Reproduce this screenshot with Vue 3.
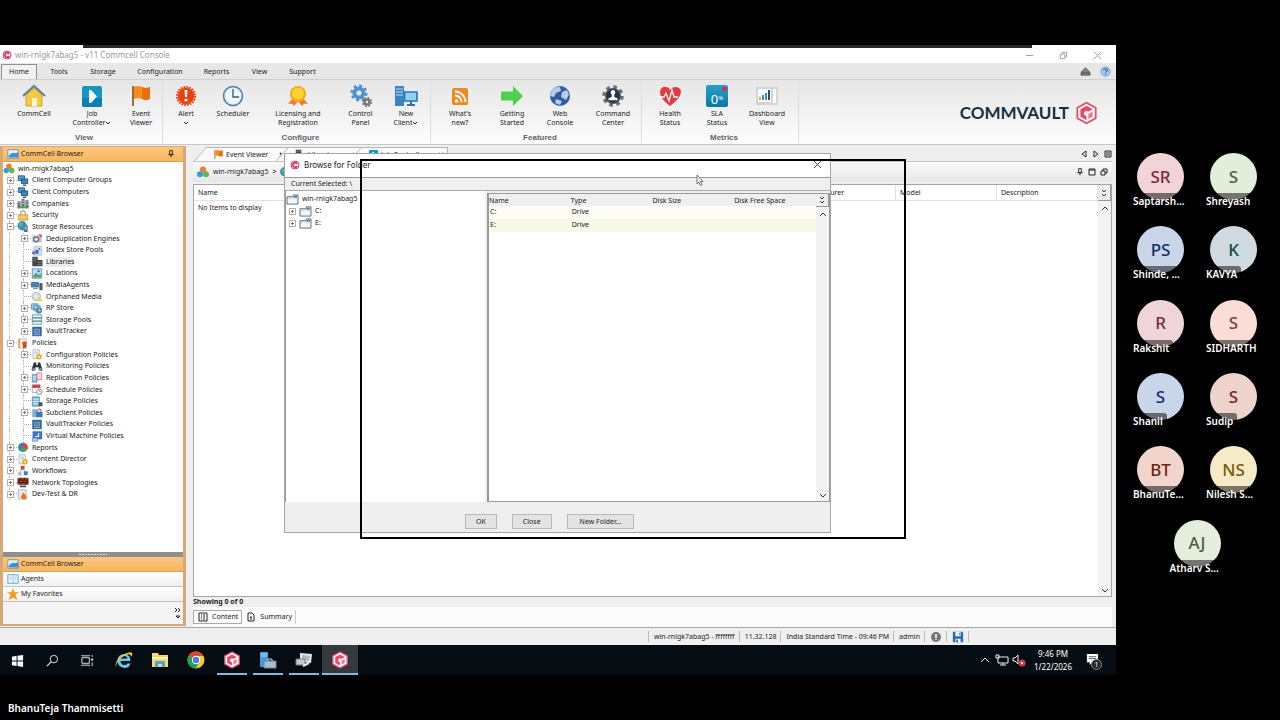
<template>
  <div class="meeting">
    <svg class="sprite" aria-hidden="true">
      <symbol id="cv" viewBox="0 0 20 20">
        <path d="M10 1 18 5.500V14.500L10 19 2 14.500V5.500Z" fill="#fff" stroke="#e8486a" stroke-width="1.500" />
        <path d="M10 3.800 15.300 6.800 11.500 9 10 8 8 9.200V11.500L10 12.700V16.200L4.700 13.200V6.800Z" fill="#e8486a" />
        <path d="M11.500 10.800l3.800-2v4.400l-3.800 2z" fill="#f07d94" />
      </symbol>
      <symbol id="cvring" viewBox="0 0 20 20">
        <circle cx="10" cy="10" r="8" fill="#fde9ed" stroke="#e0355a" stroke-width="2" />
        <path d="M14 7.500A4.500 4.500 0 1 0 14 12.500" fill="none" stroke="#c81e48" stroke-width="3" />
      </symbol>
      <symbol id="house" viewBox="0 0 24 24">
        <path d="M4 11 12 4l8 7v11H4z" fill="#f7c843" stroke="#d9a520" />
        <path d="M1 12 12 2l11 10" fill="none" stroke="#5f8396" stroke-width="2.200" />
        <path d="M10 14h5v8h-5z" fill="#fff6dc" />
      </symbol>
      <symbol id="play" viewBox="0 0 24 24">
        <rect x="2" y="2" width="20" height="21" rx="2" fill="#1398c4" />
        <path d="M2 14h20v7q0 2-2 2H4q-2 0-2-2z" fill="#0b7fae" />
        <path d="M9 6h2l6 6.500-6 6.500H9z" fill="#fff" />
      </symbol>
      <symbol id="flag" viewBox="0 0 24 24">
        <path d="M4 2v20" stroke="#9a6a3a" stroke-width="2" />
        <path d="M5 3q4-2 8 0t8 0v12q-4 2-8 0t-8 0z" fill="#f98b1c" />
        <path d="M13 3q4 2 8 0v12q-4 2-8 0z" fill="#e8700d" />
      </symbol>
      <symbol id="alert" viewBox="0 0 24 24">
        <circle cx="12" cy="12" r="8" fill="#e8400f" />
        <circle cx="12" cy="12" r="8.500" fill="none" stroke="#e8400f" stroke-width="3" stroke-dasharray="1.670 1" />
        <path d="M10.500 6h3l-.5 7h-2z" fill="#fff" />
        <circle cx="12" cy="16" r="1.600" fill="#fff" />
      </symbol>
      <symbol id="clock" viewBox="0 0 24 24">
        <circle cx="12" cy="12" r="9.500" fill="#d8ecf7" stroke="#54809c" stroke-width="1.600" />
        <circle cx="12" cy="12" r="7.500" fill="#edf7fc" />
        <path d="M12 5v8h6" fill="none" stroke="#34617e" stroke-width="1.400" />
      </symbol>
      <symbol id="medal" viewBox="0 0 24 24">
        <path d="M7 14 2 20l4-.5L8 22l4-5zM17 14l5 6-4-.5-2 2.500-4-5z" fill="#ee7a2b" />
        <circle cx="12" cy="10" r="8" fill="#f6a81c" />
        <circle cx="12" cy="9.500" r="6" fill="#fdd22e" />
      </symbol>
      <symbol id="gears" viewBox="0 0 24 24">
        <circle cx="10" cy="9" r="4.500" fill="none" stroke="#4f94cf" stroke-width="4" />
        <circle cx="10" cy="9" r="7" fill="none" stroke="#4f94cf" stroke-width="3" stroke-dasharray="2.750 2.750" />
        <circle cx="18" cy="18" r="2.500" fill="none" stroke="#77797c" stroke-width="2.500" />
        <circle cx="18" cy="18" r="4.200" fill="none" stroke="#77797c" stroke-width="2" stroke-dasharray="1.650 1.650" />
      </symbol>
      <symbol id="pc" viewBox="0 0 24 24">
        <path d="M1 2h9v20H1z" fill="#3d83bd" />
        <path d="M2 5h7M2 8h7M2 11h7" stroke="#bfe0f5" stroke-width="1.200" />
        <path d="M10.500 8h12.500v9H10.500z" fill="#8fd0f5" stroke="#2f76b0" stroke-width="1.600" />
        <path d="M17 17v3M13 21h8" stroke="#2f76b0" stroke-width="2" />
      </symbol>
      <symbol id="rss" viewBox="0 0 24 24">
        <rect x="4" y="4" width="16" height="17" rx="2" fill="#ef8a22" />
        <circle cx="8.500" cy="17" r="1.800" fill="#fff" />
        <path d="M7 11.500a6.500 6.500 0 0 1 6.500 6.500M7 7.500A10.500 10.500 0 0 1 17.500 18" fill="none" stroke="#fff" stroke-width="1.800" />
      </symbol>
      <symbol id="arrow" viewBox="0 0 24 24">
        <path d="M1 7.500h12V2L23 12 13 22v-5.500H1z" fill="#4fd14c" />
      </symbol>
      <symbol id="globe" viewBox="0 0 24 24">
        <circle cx="12" cy="12" r="10" fill="#335b9e" />
        <path d="M4 6q4-4 8-3l1 4-5 2-2 4-4-1zM14 8l5-2 2 5-3 5-5-3zM8 15l6 2-2 4-5-2z" fill="#b4cdec" />
      </symbol>
      <symbol id="command" viewBox="0 0 24 24">
        <circle cx="12" cy="12" r="9" fill="none" stroke="#6b7076" stroke-width="3.500" stroke-dasharray="3.600 3.470" />
        <circle cx="12" cy="12" r="8" fill="#4a525b" />
        <circle cx="12" cy="12" r="6.500" fill="#1d3350" />
        <path d="M12 6a2.500 2.500 0 0 1 1.300 4.500V13l3.200 1.300v2h-9v-2l3.200-1.300v-2.500A2.500 2.500 0 0 1 12 6z" fill="#fff" />
      </symbol>
      <symbol id="heart" viewBox="0 0 24 24">
        <path d="M12 22Q1 14 2 7q2-5 6-4 3 0 4 3 2-3 5-3 5 0 6 4 0 7-11 15z" fill="#e23c3f" />
        <path d="M0 13h6l2-4 3 8 3-11 2 7h4" fill="none" stroke="#fff" stroke-width="1.300" />
      </symbol>
      <symbol id="chart" viewBox="0 0 24 24">
        <path d="M1 3h22v18H1z" fill="#d4d4d4" />
        <path d="M3 5h13v13H3zM18 5h3v14h-3z" fill="#fff" />
        <path d="M5 16v-3" stroke="#e8a33a" stroke-width="2" />
        <path d="M8 16v-5M11 16V9" stroke="#3b8fc4" stroke-width="2" />
        <path d="M14 16V6" stroke="#2c4f73" stroke-width="2" />
      </symbol>
      <symbol id="balls" viewBox="0 0 14 14">
        <circle cx="7" cy="4" r="3.500" fill="#f07c31" />
        <circle cx="3.500" cy="9.500" r="3.500" fill="#3b9ad8" />
        <circle cx="10.500" cy="9.500" r="3.500" fill="#5cb947" />
      </symbol>
      <symbol id="screens" viewBox="0 0 14 14">
        <path d="M1 1h8v6H1z" fill="#4f9ad6" stroke="#1c4f80" />
        <path d="M5 5h8v6H5z" fill="#3a83c4" stroke="#1a466f" />
        <path d="M7 13h4" stroke="#29323b" stroke-width="1.500" />
      </symbol>
      <symbol id="buildings" viewBox="0 0 14 14">
        <path d="M0 4h4v9H0zM5 1h4v12H5zM10 3h4v10h-4z" fill="#69737a" />
        <path d="M1 6h2M6 4h2M11 5h2M6 7h2M11 8h2" stroke="#c8e0ee" />
        <path d="M0 12h14" stroke="#4c9c4c" stroke-width="2" />
      </symbol>
      <symbol id="lock" viewBox="0 0 14 14">
        <path d="M4 7V4a3 3 0 0 1 6 0v3" fill="none" stroke="#a5a59b" stroke-width="1.600" />
        <path d="M1 6h12v7H1z" fill="#f1c24c" stroke="#c48f24" stroke-width=".8" />
        <path d="M2 9h10" stroke="#fbe39a" />
      </symbol>
      <symbol id="store" viewBox="0 0 14 14">
        <circle cx="6" cy="6" r="6" fill="#3792c7" />
        <path d="M3 2l4 1-1 3-4 1z" fill="#67bd69" />
        <path d="M8 6h5v8H8z" fill="#5d6f80" />
        <path d="M9 8h3M9 10h3" stroke="#d9e3ec" />
      </symbol>
      <symbol id="dedup" viewBox="0 0 14 14">
        <path d="M1 3h12v9H1z" fill="#bec5cb" />
        <circle cx="6" cy="8" r="4" fill="#6f7c88" />
        <circle cx="6" cy="8" r="2" fill="#f1f4f6" />
        <path d="M8 2h5v4z" fill="#d94238" />
      </symbol>
      <symbol id="index" viewBox="0 0 14 14">
        <path d="M3 2h10v11H3z" fill="#d2e4f5" stroke="#8ea9c3" stroke-width=".7" />
        <path d="M5 6h4v5H5zM8 4h3v3" fill="#356fc4" />
        <circle cx="3" cy="10" r="2.500" fill="#76808c" />
      </symbol>
      <symbol id="library" viewBox="0 0 14 14">
        <path d="M1 1h7v12H1zM7 5h7v8H7z" fill="#434649" />
        <path d="M2 3h5M2 6h4M8 8h5M8 11h5" stroke="#8a8f93" />
      </symbol>
      <symbol id="location" viewBox="0 0 14 14">
        <path d="M1 1h12v12H1z" fill="#bfe1f5" stroke="#4b82ab" />
        <path d="M2 10l4-4 3 3 3-2v5H2z" fill="#5da65f" />
        <circle cx="9" cy="4" r="1.500" fill="#2d6ec0" />
      </symbol>
      <symbol id="agent" viewBox="0 0 14 14">
        <path d="M0 3h9v6H0z" fill="#3886c1" stroke="#44535f" stroke-width=".8" />
        <path d="M10 4h4v9h-4z" fill="#4d5961" />
        <path d="M2 11h6" stroke="#4d5961" />
      </symbol>
      <symbol id="disc" viewBox="0 0 14 14">
        <circle cx="6" cy="7" r="5.500" fill="#d5dadd" stroke="#98a0a6" stroke-width=".7" />
        <circle cx="6" cy="7" r="1.500" fill="#fff" />
        <path d="M7 13l3.500-6 3.500 6z" fill="#f0d948" />
      </symbol>
      <symbol id="rp" viewBox="0 0 14 14">
        <path d="M0 1h8v7H0zM3 3h8v7H3z" fill="#9dc9e8" stroke="#4378a2" stroke-width=".8" />
        <circle cx="9.500" cy="9.500" r="4" fill="#4f87b3" />
        <path d="M9.500 7v3h2" fill="none" stroke="#fff" />
      </symbol>
      <symbol id="pool" viewBox="0 0 14 14">
        <path d="M1 1h12v12H1z" fill="#e3f4f4" stroke="#548f92" />
        <path d="M1 5h12M1 9h12" stroke="#48898d" stroke-width="1.500" />
      </symbol>
      <symbol id="vault" viewBox="0 0 14 14">
        <path d="M1 1h12v12H1z" fill="#33649b" />
        <path d="M4 4h6v5H4z" fill="#537fae" stroke="#a8c5e1" stroke-width=".8" />
        <path d="M3 11h8" stroke="#a8c5e1" />
      </symbol>
      <symbol id="policy" viewBox="0 0 14 14">
        <path d="M2 1h9v12H2z" fill="#f7f0e4" stroke="#b1a793" stroke-width=".8" />
        <path d="M1 1h2v12H1z" fill="#e99a54" />
        <circle cx="9" cy="7" r="3" fill="#dd502c" />
        <path d="M7 9v4l2-1 2 1V9" fill="#c03b20" />
      </symbol>
      <symbol id="config" viewBox="0 0 14 14">
        <path d="M2 1h8v11H2z" fill="#eff6f8" stroke="#93a4ab" stroke-width=".8" />
        <path d="M4 4h4M4 6h4" stroke="#93a4ab" stroke-width=".8" />
        <circle cx="9.500" cy="10" r="2.500" fill="#fbe6a2" stroke="#e3ac25" stroke-width="2" />
      </symbol>
      <symbol id="binoculars" viewBox="0 0 14 14">
        <path d="M3 2h3v3h2V2h3l3 9q-2 3-5 0V8H5v3q-3 3-5 0z" fill="#29343e" />
        <circle cx="2.800" cy="10.500" r="1.500" fill="#76a7d2" />
        <circle cx="11.200" cy="10.500" r="1.500" fill="#76a7d2" />
      </symbol>
      <symbol id="replica" viewBox="0 0 14 14">
        <path d="M1 3h6v10H1z" fill="#8dbce0" stroke="#4a7da8" stroke-width=".8" />
        <path d="M7 1h6v9H7z" fill="#f4c7ca" stroke="#cc6670" stroke-width=".8" />
        <path d="M2 6h4M2 9h4M8 4h4M8 7h4" stroke="#fff" />
      </symbol>
      <symbol id="schedule" viewBox="0 0 14 14">
        <path d="M1 1h10v10H1z" fill="#fff" stroke="#997f82" stroke-width=".8" />
        <path d="M1 1h10v4H1z" fill="#c9404d" />
        <circle cx="10" cy="10" r="3.500" fill="#fff" stroke="#856c71" />
        <path d="M10 8v2h2" fill="none" stroke="#856c71" />
      </symbol>
      <symbol id="storepol" viewBox="0 0 14 14">
        <path d="M1 1h9v12H1z" fill="#7db6df" stroke="#427ca8" stroke-width=".8" />
        <path d="M2 4h7M2 7h7M2 10h7" stroke="#e8f4fb" stroke-width="1.200" />
        <path d="M9 8h5v5H9z" fill="#49575f" />
      </symbol>
      <symbol id="subclient" viewBox="0 0 14 14">
        <path d="M1 3h6v10H1z" fill="#7fafd2" />
        <path d="M6 6h8v7H6z" fill="#3279b5" />
        <path d="M8 6V4q2-3 4 0v2" fill="none" stroke="#c34f54" stroke-width="1.300" />
      </symbol>
      <symbol id="vm" viewBox="0 0 14 14">
        <path d="M2 1h11v9H2z" fill="#417cd0" stroke="#25549b" />
        <path d="M5 7h4V3" stroke="#fff" fill="none" stroke-width="1.300" />
        <path d="M1 9h7v4H1z" fill="#b8cfee" stroke="#477abf" stroke-width=".8" />
      </symbol>
      <symbol id="pie" viewBox="0 0 14 14">
        <circle cx="7" cy="7" r="6" fill="#46a654" />
        <path d="M7 7V1a6 6 0 0 1 5.500 8.500z" fill="#e2433c" />
        <path d="M7 7V1a6 6 0 0 0-4 10.500z" fill="#3485c0" />
      </symbol>
      <symbol id="flow" viewBox="0 0 14 14">
        <path d="M3 10 6 4l5 6" fill="none" stroke="#8194a5" />
        <path d="M4 1h5v5H4z" fill="#d14a43" />
        <circle cx="3" cy="11" r="2.500" fill="#9ac0e2" />
        <path d="M8 8h5v5H8z" fill="#3e7dba" />
      </symbol>
      <symbol id="wall" viewBox="0 0 14 14">
        <path d="M0 1h14v9H0z" fill="#9b3f24" />
        <path d="M0 4h14M0 7h14M4 1v3M9 1v3M2 4v3M7 4v3M12 4v3M5 7v3M10 7v3" stroke="#3b1b12" />
        <path d="M3 12h8" stroke="#35424b" stroke-width="2" />
      </symbol>
      <symbol id="dev" viewBox="0 0 14 14">
        <path d="M1 1h10v12H1z" fill="#e9edf0" stroke="#929ca5" stroke-width=".8" />
        <path d="M7 13Q2 11 6 7l1-3q6 5 4 9z" fill="#ed7325" />
      </symbol>
      <symbol id="browser" viewBox="0 0 14 14">
        <path d="M1 2h12v10H1z" fill="#e4f2fb" stroke="#5e91b7" />
        <path d="M2 9q4-5 8-3l3-1v6H2z" fill="#3d91cf" />
      </symbol>
      <symbol id="book" viewBox="0 0 14 14">
        <path d="M1 2h12v10H1z" fill="#e5f3fc" stroke="#5b9fce" />
        <path d="M7 2v10M3 5h2M9 5h2M3 7h2M9 7h2" stroke="#8fbfe0" />
      </symbol>
      <symbol id="star" viewBox="0 0 14 14">
        <path d="M7 0l2 5h5l-4 3 2 6-5-3-5 3 2-6-4-3h5z" fill="#f59b25" />
      </symbol>
      <symbol id="folder" viewBox="0 0 14 12">
        <path d="M1 3h6l1-2h5v10H1z" fill="#dfe7ed" stroke="#5a6873" />
        <path d="M8 2h4v2H8z" fill="#5d7f9c" />
        <path d="M2 6h10v4H2z" fill="#f2f6f9" />
      </symbol>
      <symbol id="pin" viewBox="0 0 10 12">
        <path d="M3 1h4v6H3zM1 7h8M5 7v4" fill="none" stroke="currentColor" stroke-width="1.400" />
      </symbol>
      <symbol id="windows" viewBox="0 0 14 14">
        <path d="M1 3l5-1v5H1zM7 2l6-1v6H7zM1 8h5v5l-5-1zM7 8h6v6l-6-1z" fill="#fff" />
      </symbol>
      <symbol id="search" viewBox="0 0 14 14">
        <circle cx="8.500" cy="5.500" r="4" fill="none" stroke="#e8e8e8" />
        <path d="M5.500 8.500 1 13" stroke="#e8e8e8" stroke-width="1.200" />
      </symbol>
      <symbol id="taskview" viewBox="0 0 14 14">
        <path d="M1 4h8v6H1zM1 1v1h8V1M1 13v-1h8v1M12 1v2M12 9v4" fill="none" stroke="#e8e8e8" />
        <path d="M11 5h2v2h-2z" fill="#fff" />
      </symbol>
      <symbol id="ie" viewBox="0 0 18 18">
        <path d="M15.500 10H5.500q.5 4 4 4 2 0 3-1.500h3Q14 17 9.500 17 3 16.500 2.500 9.500 3 3 9.500 3q6 .5 6 7zM5.500 7.500h7Q12 5 9 5T5.500 7.500z" fill="#68c8f3" />
        <path d="M1 16Q-1 10 8 4q7-4 9-2 1 2-1 4 0-5-7-1-8 5-8 11z" fill="#f5c735" />
      </symbol>
      <symbol id="explorer" viewBox="0 0 18 18">
        <path d="M1 2h6l1 2h9v12H1z" fill="#f5d774" />
        <path d="M1 6h16v2H1z" fill="#fff0b0" />
        <path d="M4 10h10v6h-3v-3H7v3H4z" fill="#43a6dd" />
      </symbol>
      <symbol id="chrome" viewBox="0 0 18 18">
        <circle cx="9" cy="9" r="8.500" fill="#f7cc35" />
        <path d="M9 9 1.600 4.700A8.500 8.500 0 0 1 16.400 5H9z" fill="#dc4437" />
        <path d="M9 9 1.600 4.700A8.500 8.500 0 0 0 8.500 17.500L12.500 11z" fill="#219e5c" />
        <circle cx="9" cy="9" r="4.200" fill="#fff" />
        <circle cx="9" cy="9" r="3.200" fill="#4380ea" />
      </symbol>
      <symbol id="server" viewBox="0 0 18 18">
        <path d="M1 1h8v15H1z" fill="#3f9bdc" />
        <path d="M2 3h6M2 5h6" stroke="#a8d8f8" />
        <path d="M5 10h12v7H5z" fill="#a7bccc" stroke="#6d8799" />
        <path d="M9 10V8h4v2" fill="none" stroke="#c6d5df" />
      </symbol>
      <symbol id="tools" viewBox="0 0 18 18">
        <path d="M5 2l12 1-1 9-11-1z" fill="#e2e8eb" />
        <path d="M7 4l8 1-1 5-7-1z" fill="#adb9c0" />
        <path d="M1 8h9v6H1z" fill="#c2ccd2" stroke="#6e7a81" />
        <path d="M8 15l6-3" stroke="#eee" stroke-width="2" />
      </symbol>
      <symbol id="floppy" viewBox="0 0 14 14">
        <path d="M1 1h11l1 1v11H1z" fill="#2869b4" />
        <path d="M4 1h6v5H4zM4 9h6v4H4z" fill="#fff" />
        <path d="M8 2h1v3H8zM5 10h2v3H5z" fill="#2869b4" />
      </symbol>
    </svg>

    <div class="stage">
      <main class="desktop">
        <div class="console">
          <header class="titlebar">
            <svg class="i10"><use href="#cvring" /></svg>
            <h1>win-rnlgk7abag5 - v11 Commcell Console</h1>
            <button aria-label="Minimize"><svg viewBox="0 0 10 10"><path d="M1 5h8" /></svg></button>
            <button aria-label="Restore"><svg viewBox="0 0 10 10"><path d="M1.500 3.500h5v5h-5zM3.500 3V1.500h5v5H7" /></svg></button>
            <button aria-label="Close"><svg viewBox="0 0 10 10"><path d="M1 1l8 8M9 1 1 9" /></svg></button>
          </header>

          <nav class="menubar">
            <button v-for="m in menus" :key="m.name" :style="{ width: m.width + 'px' }" :class="{ active: m.name === 'Home' }">{{ m.name }}</button>
            <span class="spacer"></span>
            <svg class="i11" viewBox="0 0 12 12"><path d="M1 7 6 2l5 5zM1 8h10v2H1z" fill="#888" stroke="#444" stroke-width=".8" /></svg>
            <svg class="i11" viewBox="0 0 12 12">
              <circle cx="6" cy="6" r="5" fill="#a8cdec" stroke="#6e9dc6" />
              <path d="M4 5q0-2 2-2t2 2L6 7M6 8v1" fill="none" stroke="#255e96" stroke-width="1.300" />
            </svg>
          </nav>

          <section class="ribbon">
            <div v-for="g in ribbon" :key="g.name" class="group">
              <div class="tools">
                <button v-for="t in g.tools" :key="t.icon" class="tool" :style="{ width: t.width + 'px' }">
                  <span v-if="t.icon === 'sla'" class="sla">0<small>%</small></span>
                  <svg v-else class="i24"><use :href="'#' + t.icon" /></svg>
                  <span v-for="(line, i) in t.lines" :key="line">{{ line }}<svg v-if="t.drop && i === t.lines.length - 1" class="drop" viewBox="0 0 6 4"><path d="M1 1l2 2 2-2" /></svg></span>
                  <svg v-if="t.icon === 'alert'" class="drop below" viewBox="0 0 6 4"><path d="M1 1l2 2 2-2" /></svg>
                </button>
              </div>
              <h2>{{ g.name }}</h2>
            </div>
            <div class="brand">COMMVAULT<svg><use href="#cv" /></svg></div>
          </section>

          <div class="workspace">
            <aside class="browser">
              <div class="bar orange">
                <svg class="i12"><use href="#browser" /></svg>
                <span>CommCell Browser</span>
                <svg class="i8"><use href="#pin" /></svg>
              </div>
              <div class="tree-box">
                <ul class="tree">
                  <li v-for="n in tree" :key="n.name" :class="{ selected: n.name === 'Libraries' }">
                    <span v-if="n.level === 2" class="cell rail"></span>
                    <span v-if="n.level > 0" class="cell rail branch">
                      <button v-if="n.sign" class="sign" :aria-label="'Toggle ' + n.name">
                        <svg viewBox="0 0 7 7"><path d="M2 3.500h3" /><path v-if="n.sign === '+'" d="M3.500 2v3" /></svg>
                      </button>
                    </span>
                    <svg class="node"><use :href="'#' + n.icon" /></svg>
                    <span class="label">{{ n.name }}</span>
                  </li>
                </ul>
              </div>
              <div class="splitter"></div>
              <button class="bar orange"><svg class="i12"><use href="#browser" /></svg><span>CommCell Browser</span></button>
              <button class="bar"><svg class="i12"><use href="#book" /></svg><span>Agents</span></button>
              <button class="bar"><svg class="i12"><use href="#star" /></svg><span>My Favorites</span></button>
              <div class="more"><svg viewBox="0 0 8 12"><path d="M1 1l2 2-2 2M4 1l2 2-2 2M2 9h4L4 11z" /></svg></div>
            </aside>

            <section class="content">
              <div class="tabs">
                <div v-for="t in tabs" :key="t.name" class="tab" :style="{ width: t.width + 'px' }">
                  <svg class="i11"><use :href="'#' + t.icon" /></svg>
                  <span>{{ t.name }}</span>
                  <svg class="x" viewBox="0 0 7 7"><path d="M1 1l5 5M6 1 1 6" /></svg>
                </div>
                <span class="spacer"></span>
                <svg class="ctl" viewBox="0 0 8 8"><path d="M6 1v6L2 4z" /></svg>
                <svg class="ctl" viewBox="0 0 8 8"><path d="M2 1v6l4-3z" /></svg>
                <svg class="ctl" viewBox="0 0 8 8"><path d="M1 1h6v6H1zM2 3h4M2 5h4" /></svg>
              </div>
              <div class="crumbs">
                <svg class="i12"><use href="#balls" /></svg>
                <a href="#">win-rnlgk7abag5</a><span>&gt;</span>
                <svg class="i11"><use href="#store" /></svg>
                <span class="spacer"></span>
                <svg class="ctl"><use href="#pin" /></svg>
                <svg class="ctl" viewBox="0 0 8 8"><path d="M1 1h6v6H1zM1 2h6" /></svg>
                <svg class="ctl" viewBox="0 0 8 8"><path d="M1 3h4v4H1zM3 3V1h4v4H5" /></svg>
              </div>
              <div class="grid-box">
                <div class="grid-main">
                  <table class="grid">
                    <thead>
                      <tr><th>Name</th><th class="c101">Manufacturer</th><th class="c101">Model</th><th class="c101">Description</th></tr>
                    </thead>
                    <tbody>
                      <tr><td colspan="4">No Items to display</td></tr>
                    </tbody>
                  </table>
                </div>
                <div class="scroll">
                  <button aria-label="Columns"><svg viewBox="0 0 8 8"><path d="M2 1l2 2 2-2M2 5l2 2 2-2" /></svg></button>
                  <svg viewBox="0 0 8 8"><path d="M1 5l3-3 3 3" /></svg>
                  <span class="spacer"></span>
                  <svg viewBox="0 0 8 8"><path d="M1 3l3 3 3-3" /></svg>
                </div>
              </div>
              <p class="count">Showing 0 of 0</p>
              <div class="views">
                <button class="on"><svg class="i10" viewBox="0 0 10 10"><path d="M1 1h8v8H1zM3 3h1M5 3h2M3 5h1M5 5h2M3 7h1M5 7h2" /></svg>Content</button>
                <button><svg class="i10" viewBox="0 0 10 10"><path d="M2 1h4l2 2v6H2zM4 5h2M5 5v3" /></svg>Summary</button>
              </div>
            </section>
          </div>

          <footer class="status">
            <span>win-rnlgk7abag5 - ffffffff</span>
            <span>11.32.128</span>
            <span>India Standard Time - 09:46 PM</span>
            <span>admin</span>
            <span><svg class="i12" viewBox="0 0 12 12"><circle cx="6" cy="6" r="5" fill="#777" /><path d="M6 3v4M6 8v1" stroke="#fff" stroke-width="1.600" /></svg></span>
            <span><svg class="i12"><use href="#floppy" /></svg></span>
          </footer>
        </div>

        <div class="taskbar">
          <button v-for="a in apps" :key="a.label" :class="a.state" :aria-label="a.label">
            <svg><use :href="'#' + a.icon" /></svg>
          </button>
          <span class="spacer"></span>
          <div class="tray">
            <svg viewBox="0 0 14 14"><path d="M3 9l4-4 4 4" /></svg>
            <svg viewBox="0 0 14 14"><path d="M3 4h10v6H3zM8 10v2M5 12h6M1 2h3v3H1z" /></svg>
            <svg viewBox="0 0 14 14">
              <path d="M1 5h2l3-3v9L3 8H1z" />
              <circle cx="10" cy="10" r="3.500" fill="#d33a44" stroke="none" /><path d="M9 9l2 2M11 9l-2 2" />
            </svg>
          </div>
          <div class="clock"><span>9:46 PM</span><span>1/22/2026</span></div>
          <div class="notice">
            <svg viewBox="0 0 14 14"><path d="M1 1h12v9H7l-3 3v-3H1z" fill="#fff" /><path d="M3 4h8M3 6h8" stroke="#555" /></svg>
            <span>1</span>
          </div>
        </div>

        <div class="dialog" role="dialog" aria-labelledby="dialog-title">
          <header>
            <svg class="i10"><use href="#cvring" /></svg>
            <h2 id="dialog-title">Browse for Folder</h2>
            <button aria-label="Close dialog"><svg viewBox="0 0 10 10"><path d="M1 1l8 8M9 1 1 9" /></svg></button>
          </header>
          <p class="selected-path">Current Selected: \</p>
          <div class="panes">
            <ul class="folders">
              <li><svg class="folder"><use href="#folder" /></svg>win-rnlgk7abag5</li>
              <li v-for="d in drives" :key="d">
                <button class="sign" :aria-label="'Expand ' + d"><svg viewBox="0 0 7 7"><path d="M2 3.500h3M3.500 2v3" /></svg></button>
                <svg class="folder"><use href="#folder" /></svg>{{ d }}
              </li>
            </ul>
            <div class="files">
              <div class="grid-main">
                <table class="grid">
                  <thead>
                    <tr><th>Name</th><th>Type</th><th>Disk Size</th><th>Disk Free Space</th></tr>
                  </thead>
                  <tbody>
                    <tr v-for="d in drives" :key="d"><td>{{ d }}</td><td>Drive</td><td></td><td></td></tr>
                  </tbody>
                </table>
              </div>
              <div class="scroll">
                <button aria-label="File columns"><svg viewBox="0 0 8 8"><path d="M2 1l2 2 2-2M2 5l2 2 2-2" /></svg></button>
                <svg viewBox="0 0 8 8"><path d="M1 5l3-3 3 3" /></svg>
                <span class="spacer"></span>
                <svg viewBox="0 0 8 8"><path d="M1 3l3 3 3-3" /></svg>
              </div>
            </div>
          </div>
          <div class="actions">
            <button>OK</button>
            <button>Close</button>
            <button>New Folder...</button>
          </div>
        </div>
        <div class="drag-frame"></div>
        <svg class="pointer" viewBox="0 0 8 12"><path d="M1 1v9l2-2 1.500 3.500 1.500-.7L4.500 7.500H7z" /></svg>
      </main>

      <aside class="people">
        <div v-for="p in people" :key="p.name" class="person" :class="{ last: p.initials === 'AJ' }">
          <span class="avatar" :style="{ background: p.bg, color: p.fg }">{{ p.initials }}</span>
          <span class="name">{{ p.name }}</span>
        </div>
      </aside>
    </div>
    <footer class="presenter">BhanuTeja Thammisetti</footer>
  </div>
</template>

<script setup>
const menus = [
  { name: 'Home', width: 36 },
  { name: 'Tools', width: 44 },
  { name: 'Storage', width: 44 },
  { name: 'Configuration', width: 70 },
  { name: 'Reports', width: 43 },
  { name: 'View', width: 43 },
  { name: 'Support', width: 43 }
];

const ribbon = [
  {
    name: 'View',
    tools: [
      { icon: 'house', lines: ['CommCell'], width: 60 },
      { icon: 'play', lines: ['Job', 'Controller'], width: 56, drop: true },
      { icon: 'flag', lines: ['Event', 'Viewer'], width: 42 }
    ]
  },
  {
    name: 'Configure',
    tools: [
      { icon: 'alert', lines: ['Alert'], width: 46 },
      { icon: 'clock', lines: ['Scheduler'], width: 48 },
      { icon: 'medal', lines: ['Licensing and', 'Registration'], width: 82 },
      { icon: 'gears', lines: ['Control', 'Panel'], width: 43 },
      { icon: 'pc', lines: ['New', 'Client'], width: 48, drop: true }
    ]
  },
  {
    name: 'Featured',
    tools: [
      { icon: 'rss', lines: ["What's", 'new?'], width: 58 },
      { icon: 'arrow', lines: ['Getting', 'Started'], width: 46 },
      { icon: 'globe', lines: ['Web', 'Console'], width: 50 },
      { icon: 'command', lines: ['Command', 'Center'], width: 56 }
    ]
  },
  {
    name: 'Metrics',
    tools: [
      { icon: 'heart', lines: ['Health', 'Status'], width: 56 },
      { icon: 'sla', lines: ['SLA', 'Status'], width: 38 },
      { icon: 'chart', lines: ['Dashboard', 'View'], width: 62 }
    ]
  }
];

const tree = [
  { name: 'win-rnlgk7abag5', level: 0, icon: 'balls' },
  { name: 'Client Computer Groups', level: 1, sign: '+', icon: 'screens' },
  { name: 'Client Computers', level: 1, sign: '+', icon: 'screens' },
  { name: 'Companies', level: 1, sign: '+', icon: 'buildings' },
  { name: 'Security', level: 1, sign: '+', icon: 'lock' },
  { name: 'Storage Resources', level: 1, sign: '-', icon: 'store' },
  { name: 'Deduplication Engines', level: 2, sign: '+', icon: 'dedup' },
  { name: 'Index Store Pools', level: 2, icon: 'index' },
  { name: 'Libraries', level: 2, icon: 'library' },
  { name: 'Locations', level: 2, sign: '+', icon: 'location' },
  { name: 'MediaAgents', level: 2, sign: '+', icon: 'agent' },
  { name: 'Orphaned Media', level: 2, icon: 'disc' },
  { name: 'RP Store', level: 2, sign: '+', icon: 'rp' },
  { name: 'Storage Pools', level: 2, sign: '+', icon: 'pool' },
  { name: 'VaultTracker', level: 2, sign: '+', icon: 'vault' },
  { name: 'Policies', level: 1, sign: '-', icon: 'policy' },
  { name: 'Configuration Policies', level: 2, sign: '+', icon: 'config' },
  { name: 'Monitoring Policies', level: 2, icon: 'binoculars' },
  { name: 'Replication Policies', level: 2, sign: '+', icon: 'replica' },
  { name: 'Schedule Policies', level: 2, sign: '+', icon: 'schedule' },
  { name: 'Storage Policies', level: 2, icon: 'storepol' },
  { name: 'Subclient Policies', level: 2, sign: '+', icon: 'subclient' },
  { name: 'VaultTracker Policies', level: 2, icon: 'vault' },
  { name: 'Virtual Machine Policies', level: 2, icon: 'vm' },
  { name: 'Reports', level: 1, sign: '+', icon: 'pie' },
  { name: 'Content Director', level: 1, sign: '+', icon: 'config' },
  { name: 'Workflows', level: 1, sign: '+', icon: 'flow' },
  { name: 'Network Topologies', level: 1, sign: '+', icon: 'wall' },
  { name: 'Dev-Test & DR', level: 1, sign: '+', icon: 'dev' }
];

const tabs = [
  { name: 'Event Viewer', icon: 'flag', width: 82 },
  { name: 'Libraries', icon: 'library', width: 73 },
  { name: 'Job Controller', icon: 'play', width: 86 }
];

const drives = ['C:', 'E:'];

const apps = [
  { label: 'Start', icon: 'windows', state: 'system' },
  { label: 'Search', icon: 'search', state: 'system' },
  { label: 'Task view', icon: 'taskview', state: 'system' },
  { label: 'Internet Explorer', icon: 'ie' },
  { label: 'File Explorer', icon: 'explorer' },
  { label: 'Chrome', icon: 'chrome' },
  { label: 'Process Manager', icon: 'cv', state: 'running' },
  { label: 'Server Manager', icon: 'server', state: 'running' },
  { label: 'Services', icon: 'tools', state: 'running' },
  { label: 'CommCell Console', icon: 'cv', state: 'running current' }
];

const people = [
  { initials: 'SR', name: 'Saptarsh...', bg: '#f2d3d8', fg: '#792a3b' },
  { initials: 'S', name: 'Shreyash', bg: '#e3eddb', fg: '#48643e' },
  { initials: 'PS', name: 'Shinde, ...', bg: '#c9d6e9', fg: '#102f65' },
  { initials: 'K', name: 'KAVYA', bg: '#cfdbe0', fg: '#17494d' },
  { initials: 'R', name: 'Rakshit', bg: '#efd5da', fg: '#752b3d' },
  { initials: 'S', name: 'SIDHARTH', bg: '#f9ddd6', fg: '#873b37' },
  { initials: 'S', name: 'Shanil', bg: '#c9d5e8', fg: '#102f70' },
  { initials: 'S', name: 'Sudip', bg: '#edd3cc', fg: '#7d251e' },
  { initials: 'BT', name: 'BhanuTe...', bg: '#f1d5cc', fg: '#6d2415' },
  { initials: 'NS', name: 'Nilesh S...', bg: '#f7eac7', fg: '#755b12' },
  { initials: 'AJ', name: 'Atharv S...', bg: '#e5eedc', fg: '#48613e' }
];
</script>

<style>
body {
  margin: 0;
  background: #000;
}
</style>

<style scoped>
* {
  box-sizing: border-box;
}

button {
  margin: 0;
  padding: 0;
  border: 0;
  background: none;
  color: inherit;
  font: inherit;
}

h1,
h2,
p,
ul {
  margin: 0;
  padding: 0;
  font-size: inherit;
  font-weight: 400;
  list-style: none;
}

svg {
  display: block;
  flex: none;
}

.sprite {
  position: absolute;
  width: 0;
  height: 0;
}

.spacer {
  flex: 1;
}

.i8 { width: 8px; height: 8px; }
.i10 { width: 10px; height: 10px; }
.i11 { width: 11px; height: 11px; }
.i12 { width: 12px; height: 12px; }
.i24 { width: 24px; height: 24px; }

.meeting {
  display: flex;
  flex-direction: column;
  min-height: 100vh;
  padding-top: 45px;
  background: #000;
  color: #222;
  font-family: "Noto Sans", "Open Sans", sans-serif;
  font-size: 7px;
  line-height: 10px;
}

.stage {
  display: flex;
  flex: 1;
}

.desktop {
  position: relative;
  display: flex;
  flex: 1;
  flex-direction: column;
  min-width: 0;
}

.console {
  display: flex;
  flex: 1;
  flex-direction: column;
  background: #efefef;
}

/* title bar and menu */
.titlebar {
  display: flex;
  align-items: center;
  height: 18px;
  padding: 2px 2px 0;
  background: #fff;
  color: #999;
  font-size: 8px;
}

.titlebar::before {
  position: absolute;
  top: 0;
  right: 84px;
  left: 83px;
  height: 3px;
  background: #2b2829;
  content: "";
}

.titlebar h1 {
  flex: 1;
  margin-left: 3px;
}

.titlebar button {
  display: grid;
  place-items: center;
  width: 34px;
}

.titlebar button svg,
.dialog header button svg {
  width: 9px;
  height: 9px;
  fill: none;
  stroke: #999;
}

.menubar {
  display: flex;
  align-items: center;
  gap: 9px;
  height: 17px;
  padding: 1px 5px 0 1px;
  border-bottom: 1px solid #cfcfcf;
  background: #e7e7e7;
}

.menubar button {
  height: 15px;
  margin-right: -9px;
}

.menubar .active {
  border: 1px solid #8f8f8f;
  border-bottom: 0;
  background: #f1f1f1;
}

/* ribbon */
.ribbon {
  display: flex;
  height: 65px;
  border-bottom: 1px solid #c8c8c8;
  background: linear-gradient(#e6e6e6, #fdfdfd);
}

.group {
  display: flex;
  flex-direction: column;
  justify-content: space-between;
  border-right: 1px solid #dcdcdc;
  padding: 4px 0 1px;
}

.group:first-child {
  padding-left: 4px;
}

.tools {
  display: flex;
}

.tool {
  display: flex;
  flex-direction: column;
  align-items: center;
  line-height: 9px;
}

.tool > svg:first-child {
  margin-bottom: 1px;
}

.tool > span {
  white-space: nowrap;
}

.tool .drop {
  display: inline-block;
  width: 6px;
  height: 4px;
  fill: none;
  stroke: #222;
}

.tool .below {
  margin-top: 3px;
}

.sla {
  position: relative;
  width: 22px;
  height: 22px;
  margin: 1px 0 2px;
  border-radius: 2px;
  background: linear-gradient(#2aa0c8, #0878a8);
  color: #fff;
  font-size: 13px;
  line-height: 26px;
}

.sla small {
  font-size: 6px;
  vertical-align: 4px;
}

.sla::after {
  position: absolute;
  top: 2px;
  right: 1px;
  width: 5px;
  height: 4px;
  border-radius: 1px;
  background: #d9303e;
  content: "";
}

.group h2 {
  padding-left: 8px;
  color: #5d6470;
  font-family: "Liberation Sans", Arial, sans-serif;
  font-size: 8px;
  font-weight: 700;
  text-align: center;
}

.group:first-child h2 {
  padding-left: 2px;
}

.brand {
  display: flex;
  flex: 1;
  align-items: center;
  justify-content: flex-end;
  gap: 6px;
  padding: 2px 18px 0 0;
  color: #15303f;
  font-family: Lato, sans-serif;
  font-size: 17px;
  font-weight: 700;
}

.brand svg {
  width: 23px;
  height: 24px;
}

/* navigation panel */
.workspace {
  display: flex;
  flex: 1;
  gap: 7px;
  border-bottom: 1px solid #a8a8a8;
}

.browser {
  display: flex;
  flex: none;
  flex-direction: column;
  width: 186px;
  margin: 1px 0;
  border: solid #d9a778;
  border-width: 1px 3px 2px;
  background: #f4f4f4;
}

.bar {
  display: flex;
  align-items: center;
  gap: 2px;
  height: 15px;
  padding: 0 8px 0 4px;
  border-bottom: 1px solid #c4c4c4;
  background: linear-gradient(#fff, #f0f0f0);
  text-align: left;
}

.bar span {
  flex: 1;
}

.bar.orange {
  border-color: #d5a05c;
  background: linear-gradient(#fdc77f, #fbb45c);
}

.tree-box {
  flex: 1;
  padding-top: 1px;
  background: #fff;
}

.tree {
  display: grid;
  grid-auto-rows: 1fr;
  height: 337px;
}

.tree li {
  display: flex;
  align-items: center;
}

.node {
  width: 12px;
  height: 11px;
  margin-right: 3px;
}

.cell {
  position: relative;
  display: grid;
  place-items: center;
  align-self: stretch;
  width: 14px;
}

.rail::before {
  position: absolute;
  top: 0;
  bottom: 0;
  left: 6px;
  border-left: 1px dotted #b5b5b5;
  content: "";
}

.branch::after {
  position: absolute;
  top: 5px;
  right: 0;
  left: 7px;
  border-top: 1px dotted #b5b5b5;
  content: "";
}

.sign {
  position: relative;
  z-index: 1;
  flex: none;
  width: 7px;
  height: 7px;
  border: 1px solid #b0b0b0;
  background: #fff;
}

.sign svg {
  width: 7px;
  height: 7px;
  margin: -1px;
  stroke: #777;
}

.selected .label {
  background: #ececec;
}

.splitter {
  height: 5px;
  border: solid #8f8f8f;
  border-width: 2px 76px;
  background: repeating-linear-gradient(90deg, #ddd 0 2px, #8f8f8f 2px 3px);
}

.more {
  display: flex;
  justify-content: flex-end;
  height: 22px;
  padding: 5px 1px;
}

.more svg {
  width: 8px;
  height: 12px;
  fill: none;
  stroke: #222;
}

/* content area */
.content {
  display: flex;
  flex: 1;
  flex-direction: column;
  min-width: 0;
  padding-right: 4px;
}

.tabs {
  display: flex;
  align-items: center;
  height: 17px;
  padding: 2px 0 0 14px;
  border-bottom: 1px solid #c4c4c4;
}

.tab {
  position: relative;
  display: flex;
  align-items: center;
  align-self: stretch;
  gap: 2px;
  padding: 0 3px 0 6px;
  border: solid #b4b4b4;
  border-width: 1px 1px 0 0;
  background: #fafafa;
}

.tab::before {
  position: absolute;
  top: -1px;
  bottom: 0;
  left: -7px;
  width: 14px;
  border: solid #b4b4b4;
  border-width: 1px 0 0 1px;
  background: #fafafa;
  content: "";
  transform: skewX(-42deg);
}

.tab > * {
  position: relative;
}

.tab span {
  flex: 1;
  white-space: nowrap;
}

.x {
  width: 6px;
  height: 6px;
  stroke: #111;
  stroke-width: 1.5;
}

.ctl {
  width: 8px;
  height: 8px;
  margin-left: 4px;
  fill: none;
  stroke: #222;
}

.crumbs {
  display: flex;
  align-items: center;
  gap: 4px;
  height: 20px;
  padding: 0 4px;
  background: linear-gradient(#fafafa, #e6e6e6);
}

.crumbs .ctl {
  margin-left: 0;
}

.crumbs a {
  color: inherit;
  text-decoration: none;
}

.grid-box {
  display: flex;
  flex: 1;
  margin-top: 2px;
  border: 1px solid #a6a6a6;
  background: #fff;
}

.grid-main {
  flex: 1;
}

.grid {
  width: 100%;
  border-spacing: 0;
  table-layout: fixed;
}

.grid th,
.grid td {
  padding: 0 0 0 4px;
  font-weight: 400;
  text-align: left;
}

.grid-box th {
  height: 16px;
  border: solid #e2e2e2;
  border-width: 0 1px 1px 0;
}

.grid-box td {
  height: 13px;
}

.c101 {
  width: 101px;
}

.scroll {
  display: flex;
  flex-direction: column;
  align-items: center;
  gap: 4px;
  width: 13px;
  padding-bottom: 2px;
  background: #f3f3f3;
}

.scroll svg {
  width: 8px;
  height: 8px;
  fill: none;
  stroke: #333;
}

.scroll button {
  display: grid;
  place-items: center;
  align-self: stretch;
  height: 16px;
  border: solid #999;
  border-width: 0 1px 1px 0;
  background: #eee;
}

.count {
  height: 10px;
  font-weight: 700;
}

.views {
  display: flex;
  align-items: center;
  height: 20px;
  background: #fbfbfb;
}

.views button {
  display: flex;
  align-items: center;
  gap: 4px;
  height: 14px;
  padding: 0 3px 0 4px;
  border-right: 1px solid #ccc;
}

.views .on {
  border: 1px solid #aaa;
}

.views svg {
  fill: none;
  stroke: #222;
}

.status {
  display: flex;
  justify-content: flex-end;
  height: 17px;
  padding: 3px 147px 3px 0;
}

.status span {
  display: flex;
  align-items: center;
  padding: 0 4px 0 5px;
  border-left: 1px solid #bbb;
}

.status span:last-child {
  border-right: 1px solid #bbb;
}

/* taskbar */
.taskbar {
  display: flex;
  height: 30px;
  background: #050d13;
  color: #fff;
}

.taskbar button {
  display: grid;
  place-items: center;
  width: 36px;
}

.taskbar button svg {
  width: 18px;
  height: 18px;
}

.taskbar .system {
  width: 35px;
}

.taskbar .system svg {
  width: 13px;
  height: 13px;
}

.taskbar .system + button:not(.system) {
  margin-left: 1px;
}

.taskbar .running {
  background: linear-gradient(#83b9e0, #83b9e0) center bottom / 30px 2px no-repeat;
}

.taskbar .current {
  background: linear-gradient(#83b9e0, #83b9e0) center bottom / 36px 2px no-repeat #353a3f;
}

.tray {
  display: flex;
  align-items: center;
  gap: 3px;
}

.tray svg {
  width: 14px;
  height: 14px;
  fill: none;
  stroke: #eee;
}

.clock {
  display: flex;
  flex-direction: column;
  justify-content: center;
  width: 58px;
  padding-right: 4px;
  font-size: 8px;
  line-height: 13px;
  text-align: center;
}

.notice {
  position: relative;
  width: 32px;
  padding: 8px 2px;
}

.notice svg {
  width: 13px;
  height: 13px;
}

.notice span {
  position: absolute;
  top: 14px;
  left: 7px;
  width: 11px;
  height: 11px;
  border: 1px solid #888;
  border-radius: 50%;
  background: #24292e;
  font-size: 7px;
  line-height: 9px;
  text-align: center;
}

/* folder dialog */
.dialog {
  position: absolute;
  top: 108px;
  left: 284px;
  display: flex;
  flex-direction: column;
  width: 547px;
  height: 380px;
  border: 1px solid #a5a5a5;
  background: #efefef;
}

.dialog header {
  display: flex;
  align-items: center;
  gap: 4px;
  height: 24px;
  padding: 0 8px 2px 5px;
  border-bottom: 1px solid #999;
  background: #fff;
  font-size: 8px;
}

.dialog header h2 {
  flex: 1;
}

.dialog header button svg {
  stroke: #333;
}

.selected-path {
  height: 13px;
  padding: 1px 6px;
  border-bottom: 1px solid #aaa;
}

.panes {
  display: flex;
  flex: 1;
  gap: 2px;
}

.folders {
  width: 200px;
  padding-top: 2px;
  border-left: 1px solid #999;
  background: #fff;
}

.folders li {
  display: flex;
  align-items: center;
  gap: 3px;
  height: 12px;
}

.folders li + li {
  padding-left: 3px;
}

.folder {
  width: 13px;
  height: 11px;
}

.files {
  display: flex;
  flex: 1;
  margin-top: 2px;
  border: solid #999;
  border-width: 1px 1px 1px 2px;
  background: #fff;
}

.files th {
  height: 12px;
  padding: 1px 0 0;
  background: #efefef;
}

.files td {
  height: 13px;
  padding: 0 0 2px 1px;
}

.files tbody tr {
  background: #fdfdf4;
}

.files tbody tr:nth-child(2) {
  background: #f9f9e9;
}

.files .scroll button {
  height: 13px;
}

.actions {
  display: flex;
  gap: 15px;
  height: 30px;
  padding: 12px 0 3px 180px;
}

.actions button {
  height: 15px;
  padding: 0 10px;
  border: 1px solid #b9b9b9;
  background: #e3e3e3;
}

.actions button:last-child {
  padding: 0 12px;
}

.drag-frame {
  position: absolute;
  top: 114px;
  left: 360px;
  width: 546px;
  height: 380px;
  border: 2px solid #000;
}

.pointer {
  position: absolute;
  top: 129px;
  left: 696px;
  width: 8px;
  height: 12px;
  fill: #fff;
  stroke: #555;
  stroke-width: 0.8;
}

/* participants */
.people {
  display: grid;
  flex: none;
  grid-template-columns: repeat(2, 73px);
  grid-template-rows: repeat(6, 1fr);
  align-self: flex-start;
  width: 164px;
  height: 440px;
  margin-top: 108px;
  padding-left: 8px;
}

.person {
  position: relative;
  display: flex;
  justify-content: center;
}

.person.last {
  grid-column: 1 / 3;
  justify-self: center;
  width: 73px;
}

.avatar {
  display: grid;
  place-items: center;
  width: 47px;
  height: 47px;
  border-radius: 50%;
  font-size: 17px;
  font-weight: 500;
}

.name {
  position: absolute;
  top: 40px;
  left: 5px;
  padding: 0 4px;
  border-radius: 3px;
  background: rgba(0, 0, 0, 0.5);
  color: #fff;
  font-size: 10px;
  font-weight: 600;
  line-height: 16px;
  white-space: nowrap;
}

.presenter {
  height: 45px;
  padding: 26px 8px 0;
  color: #fff;
  font-size: 10px;
  font-weight: 600;
  line-height: 14px;
}
</style>
